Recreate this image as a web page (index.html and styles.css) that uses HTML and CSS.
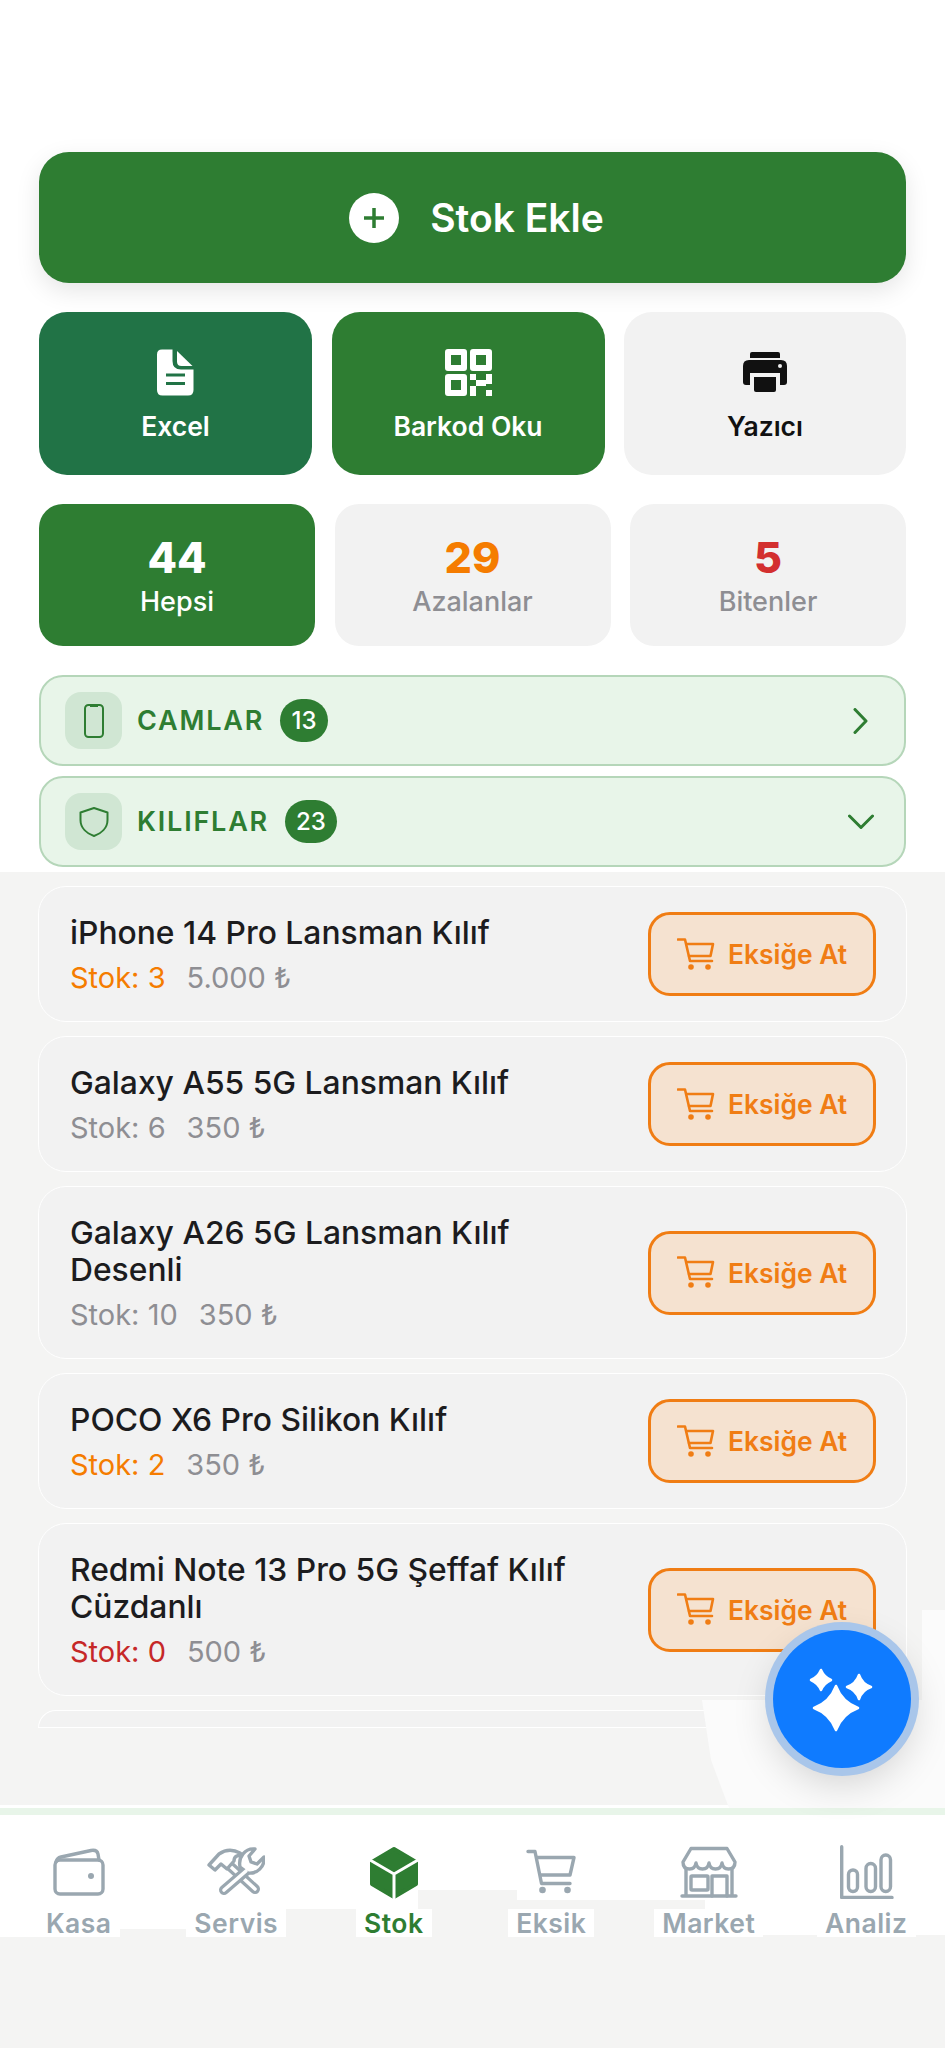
FILE: index.html
```html
<!doctype html>
<html lang="tr">
<head>
<meta charset="utf-8">
<title>Stok</title>
<link rel="stylesheet" href="styles.css">
</head>
<body>

<div class="page">

	<div class="top">

		<button class="add-btn">
			<span class="add-circle">
				<svg width="24" height="24" viewBox="0 0 24 24"><path d="M12 2V22M2 12H22" class="plus"/></svg>
			</span>
			Stok Ekle
		</button>

		<div class="tools">
			<div class="tool tool-excel">
				<svg width="37" height="47" viewBox="0 0 37 47">
					<path class="white" fill-rule="evenodd" d="M5 0.5H15.5V12Q15.5 20.5 24 20.5H36.5V41Q36.5 46.5 31 46.5H5.5Q0 46.5 0 41V5.5Q0 0.5 5 0.5ZM9 24.5V27.5H28V24.5ZM9 33V36H28V33Z"/>
					<path class="white" d="M20 2L35.5 17H24.5Q20 17 20 12.5Z"/>
				</svg>
				<span>Excel</span>
			</div>
			<div class="tool tool-green">
				<svg width="47" height="47" viewBox="0 0 47 47">
					<g class="white" fill-rule="evenodd">
						<path d="M3 0H19Q22 0 22 3V19Q22 22 19 22H3Q0 22 0 19V3Q0 0 3 0ZM6 6V16H16V6Z"/>
						<path d="M28 0H44Q47 0 47 3V19Q47 22 44 22H28Q25 22 25 19V3Q25 0 28 0ZM31 6V16H41V6Z"/>
						<path d="M3 25H19Q22 25 22 28V44Q22 47 19 47H3Q0 47 0 44V28Q0 25 3 25ZM6 31V41H16V31Z"/>
					</g>
					<path class="white" d="M25 25H31V31H25ZM41 25H47V35H41ZM31 31H41V37H31ZM25 37H31V47H25ZM41 41H47V47H41Z"/>
				</svg>
				<span>Barkod Oku</span>
			</div>
			<div class="tool tool-gray">
				<svg width="44" height="42" viewBox="0 0 44 42">
					<path d="M9 0H35Q37 0 37 2V6H7V2Q7 0 9 0Z" class="black"/>
					<path d="M6 8H38Q44 8 44 14V30Q44 33 41 33H37V21H7V33H3Q0 33 0 30V14Q0 8 6 8Z" class="black"/>
					<path d="M11 25H33V38Q33 40 31 40H13Q11 40 11 38Z" class="black"/>
					<circle cx="37" cy="14" r="2" class="dot"/>
				</svg>
				<span>Yazıcı</span>
			</div>
		</div>

		<div class="stats">
			<div class="stat stat-on">
				<div class="stat-num">44</div>
				<div class="stat-label">Hepsi</div>
			</div>
			<div class="stat">
				<div class="stat-num orange">29</div>
				<div class="stat-label">Azalanlar</div>
			</div>
			<div class="stat">
				<div class="stat-num red">5</div>
				<div class="stat-label">Bitenler</div>
			</div>
		</div>

		<div class="cat">
			<span class="cat-icon">
				<svg width="20" height="34" viewBox="0 0 20 34">
					<rect x="1" y="1" width="18" height="32" rx="3.5" class="line-green"/>
					<path d="M6 2H14" class="line-green"/>
				</svg>
			</span>
			<span class="cat-name">CAMLAR</span>
			<span class="cat-count">13</span>
			<svg class="chev" width="26" height="26" viewBox="0 0 26 26"><path d="M7 1.5L18 13L7 24.5" class="line-chev"/></svg>
		</div>

		<div class="cat">
			<span class="cat-icon">
				<svg width="30" height="30" viewBox="0 0 30 30">
					<path d="M15 1L28.5 5.5V13C28.5 21 22 26.5 15 29C8 26.5 1.5 21 1.5 13V5.5Z" class="line-green"/>
				</svg>
			</span>
			<span class="cat-name">KILIFLAR</span>
			<span class="cat-count">23</span>
			<svg class="chev" width="26" height="26" viewBox="0 0 26 26"><path d="M1.5 7L13 18.5L24.5 7" class="line-chev"/></svg>
		</div>

	</div>

	<div class="list">

		<div class="card">
			<div class="card-text">
				<div class="card-title">iPhone 14 Pro Lansman Kılıf</div>
				<div class="card-meta"><span class="orange">Stok: 3</span><span>5.000 ₺</span></div>
			</div>
			<button class="short-btn"><svg class="cart" width="38" height="33" viewBox="0 0 38 33"><use href="#cart"/></svg>Eksiğe At</button>
		</div>

		<div class="card">
			<div class="card-text">
				<div class="card-title">Galaxy A55 5G Lansman Kılıf</div>
				<div class="card-meta"><span>Stok: 6</span><span>350 ₺</span></div>
			</div>
			<button class="short-btn"><svg class="cart" width="38" height="33" viewBox="0 0 38 33"><use href="#cart"/></svg>Eksiğe At</button>
		</div>

		<div class="card">
			<div class="card-text">
				<div class="card-title">Galaxy A26 5G Lansman Kılıf Desenli</div>
				<div class="card-meta"><span>Stok: 10</span><span>350 ₺</span></div>
			</div>
			<button class="short-btn"><svg class="cart" width="38" height="33" viewBox="0 0 38 33"><use href="#cart"/></svg>Eksiğe At</button>
		</div>

		<div class="card">
			<div class="card-text">
				<div class="card-title">POCO X6 Pro Silikon Kılıf</div>
				<div class="card-meta"><span class="orange">Stok: 2</span><span>350 ₺</span></div>
			</div>
			<button class="short-btn"><svg class="cart" width="38" height="33" viewBox="0 0 38 33"><use href="#cart"/></svg>Eksiğe At</button>
		</div>

		<div class="card">
			<div class="card-text">
				<div class="card-title">Redmi Note 13 Pro 5G Şeffaf Kılıf Cüzdanlı</div>
				<div class="card-meta"><span class="red-soft">Stok: 0</span><span>500 ₺</span></div>
			</div>
			<button class="short-btn"><svg class="cart" width="38" height="33" viewBox="0 0 38 33"><use href="#cart"/></svg>Eksiğe At</button>
		</div>

		<div class="card card-cut"></div>

	</div>

	<nav class="nav">
		<svg class="nav-patch" width="945" height="122" viewBox="0 0 945 122"><path d="M112 122V114H282V94H418V75H517V85H705V120H945V122Z"/></svg>
		<div class="nav-item">
			<svg class="nav-icon" width="52" height="54" viewBox="0 0 52 54">
				<rect x="2" y="15" width="48" height="34" rx="5"/>
				<path d="M3 17Q4 13 8 12L38 5.5Q44 4.5 45 9L46 15"/>
				<circle cx="38" cy="31" r="3" class="nav-dot"/>
			</svg>
			<span>Kasa</span>
		</div>
		<div class="nav-item">
			<svg class="nav-icon" width="58" height="54" viewBox="0 0 58 54">
				<path class="tool-out" d="M24 22L48 44"/>
				<path class="tool-in" d="M24 22L48 44"/>
				<path class="tool-fill" d="M2 20L12 9Q22 2 33 8L36 11Q27 9 27 16L20 24L14 19L8 25Z"/>
				<path class="tool-out" d="M38 27L17 45"/>
				<path class="tool-fill" d="M33 22C31 12 38 3 48 4L42 11L44 17L50 19L57 12C58 22 50 29 41 28Z"/>
				<path class="tool-in" d="M39 26L17 45"/>
			</svg>
			<span>Servis</span>
		</div>
		<div class="nav-item nav-on">
			<svg width="50" height="54" viewBox="0 0 50 54">
				<path class="cube" d="M25 4L47 17V39L25 52L3 39V17Z"/>
				<path class="cube-y" d="M25 29L1 15M25 29L49 15M25 29V54"/>
			</svg>
			<span>Stok</span>
		</div>
		<div class="nav-item">
			<svg class="nav-icon" width="50" height="54" viewBox="0 0 50 54">
				<path d="M2 6.5H9L15.5 38.5H44"/>
				<path d="M11 12.5H48L44 30H15"/>
				<circle cx="16.5" cy="45" r="3.3" class="nav-dot"/>
				<circle cx="41.5" cy="45" r="3.3" class="nav-dot"/>
			</svg>
			<span>Eksik</span>
		</div>
		<div class="nav-item">
			<svg class="nav-icon" width="58" height="54" viewBox="0 0 58 54">
				<path d="M11 3.5H47L55 17Q55 24 48.5 24Q43 24 42 18Q41 24 35.5 24Q30 24 29 18Q28 24 22.5 24Q17 24 16 18Q15 24 9.5 24Q3 24 3 17Z"/>
				<path d="M6 24V51M52 24V51M2 51H56"/>
				<rect x="11" y="31" width="17" height="14" rx="1"/>
				<path d="M32 51V31H47V51"/>
			</svg>
			<span>Market</span>
		</div>
		<div class="nav-item">
			<svg class="nav-icon" width="56" height="54" viewBox="0 0 56 54">
				<path d="M3.7 1.7V52.5H54"/>
				<rect x="10.5" y="25" width="9" height="21.5" rx="4.5"/>
				<rect x="28" y="18.5" width="9.5" height="28" rx="4.7"/>
				<rect x="43" y="10" width="9.5" height="36.5" rx="4.7"/>
			</svg>
			<span>Analiz</span>
		</div>
	</nav>

	<div class="glow glow-low"></div>
	<div class="glow glow-side"></div>

	<div class="fab">
		<svg width="80" height="80" viewBox="0 0 80 80">
			<path class="star" d="M34 27Q40 43 56 49Q40 55 34 71Q28 55 12 49Q28 43 34 27Z"/>
			<path class="star" d="M19 11Q22 18 29 21Q22 24 19 31Q16 24 9 21Q16 18 19 11Z"/>
			<path class="star" d="M57 16Q60 25 69 28Q60 31 57 40Q54 31 45 28Q54 25 57 16Z"/>
		</svg>
	</div>

</div>

<svg width="0" height="0" class="defs">
	<symbol id="cart" viewBox="0 0 38 33">
		<path d="M1 1.5H8L13 23H35" class="line-cart"/>
		<path d="M10 6H36L33.5 18H12" class="line-cart"/>
		<circle cx="14" cy="29" r="2.8" class="dot-cart"/>
		<circle cx="31" cy="29" r="2.8" class="dot-cart"/>
	</symbol>
</svg>

</body>
</html>
```
FILE: styles.css
```css
body { margin: 0; background: #f4f4f3; font-family: Inter, "Liberation Sans", sans-serif; }
button { font-family: inherit; cursor: pointer; }
svg { display: block; }

.page { position: relative; width: 945px; height: 2048px; overflow: hidden; }
.defs { position: absolute; }

.white { fill: #fff; }
.black { fill: #111; }
.dot { fill: #eee; }
.orange { color: #f57c00; }
.red { color: #d32f2f; }
.red-soft { color: #c62828; }

.top { background: #fff; padding: 152px 39px 5px; height: 715px; }

.add-btn { width: 867px; height: 131px; padding: 0 0 0 8px; background: #2e7d32; color: #fff; border: none; border-radius: 30px; box-shadow: 0 8px 24px rgba(0, 0, 0, .1); font-size: 39px; font-weight: 600; display: flex; align-items: center; justify-content: center; gap: 31px; }
.add-circle { width: 50px; height: 50px; border-radius: 50%; background: #fff; display: flex; align-items: center; justify-content: center; }
.plus { stroke: #2e7d32; stroke-width: 3.5; fill: none; }

.tools { display: grid; grid-template-columns: 273px 273px 282px; column-gap: 19.5px; margin-top: 29px; }
.tool { height: 163px; border-radius: 28px; display: flex; flex-direction: column; align-items: center; padding-top: 37px; box-sizing: border-box; font-size: 26.5px; font-weight: 600; color: #fff; }
.tool span { margin-top: 13.5px; line-height: 32px; }
.tool-excel { background: #217346; }
.tool-green { background: #2e7d32; }
.tool-gray { background: #f2f2f2; color: #111; }
.tool-gray svg { margin: 3px 0 2px; }

.stats { display: grid; grid-template-columns: repeat(3, 276px); column-gap: 19.5px; margin-top: 29px; }
.stat { height: 142px; border-radius: 24px; background: #f2f2f2; display: flex; flex-direction: column; align-items: center; padding-top: 28px; box-sizing: border-box; }
.stat-num { font-size: 43px; font-weight: 800; line-height: 50px; }
.stat-label { font-size: 27px; font-weight: 500; line-height: 32px; margin-top: 4px; color: #8e8e93; }
.stat-on { background: #2e7d32; color: #fff; }
.stat-on .stat-label { color: #fff; }

.cat { height: 91px; box-sizing: border-box; border: 2px solid #b5d6b9; border-radius: 24px; background: #e8f5e9; display: flex; align-items: center; padding: 0 24px; margin-top: 10px; }
.stats + .cat { margin-top: 29px; }
.cat-icon { width: 57px; height: 57px; border-radius: 16px; background: #d0e6d3; display: flex; align-items: center; justify-content: center; }
.cat-name { margin-left: 15px; font-size: 27px; font-weight: 600; letter-spacing: 1.8px; color: #2e7d32; }
.cat-count { margin-left: 16px; min-width: 48px; height: 43px; padding: 0 11px; box-sizing: border-box; border-radius: 22px; background: #2e7d32; color: #fff; font-size: 24px; font-weight: 500; display: flex; align-items: center; justify-content: center; }
.chev { margin-left: auto; margin-right: 6px; }
.line-green { fill: none; stroke: #2e7d32; stroke-width: 2; stroke-linejoin: round; }
.line-chev { fill: none; stroke: #2e7d32; stroke-width: 3; stroke-linecap: round; stroke-linejoin: round; }

.list { height: 922px; padding: 14px 38px 0; overflow: hidden; display: flex; flex-direction: column; gap: 14px; }
.card { flex: none; border: 1.5px solid #fff; border-radius: 28px; background: #f2f2f2; display: flex; align-items: center; justify-content: space-between; padding: 0 30px 0 31px; }
.card-text { width: 520px; padding: 27px 0 25px; }
.card-title { font-size: 31.8px; font-weight: 500; line-height: 37px; color: #1c1c1e; }
.card-meta { display: flex; gap: 21px; height: 36px; margin-top: 9px; font-size: 29px; line-height: 36px; color: #8e8e93; }
.card-cut { height: 18px; padding: 0; box-sizing: border-box; border-bottom-left-radius: 0; border-bottom-right-radius: 0; }

.short-btn { width: 228px; height: 84px; flex: none; box-sizing: border-box; border: 3px solid #f07d14; border-radius: 22px; background: #f5e2d0; color: #f07d14; font-size: 26.4px; font-weight: 600; display: flex; align-items: center; justify-content: center; gap: 13px; padding: 0; }
.line-cart { fill: none; stroke: #f07d14; stroke-width: 2.6; stroke-linecap: round; stroke-linejoin: round; }
.dot-cart { fill: #f07d14; }

.nav { position: relative; background: #fff; height: 92px; border-top: 7px solid #e8f5e9; display: grid; grid-template-columns: repeat(6, 1fr); padding-top: 30px; box-shadow: 0 -3px 0 #fff; }
.nav-patch { position: absolute; left: 0; top: 0; fill: #f4f4f3; }
.nav-item { position: relative; display: flex; flex-direction: column; align-items: center; font-size: 26.5px; font-weight: 600; letter-spacing: .5px; color: #9aa7b0; }
.nav-item span { margin-top: 10px; line-height: 28px; background: #fff; padding: 0 8px; }
.nav-on { color: #2e7d32; }
.nav-icon { fill: none; stroke: #9aa7b0; stroke-width: 3.4; stroke-linecap: round; stroke-linejoin: round; }
.nav-dot { fill: #9aa7b0; stroke: none; }
.tool-out { stroke-width: 10; }
.tool-in { stroke: #fff; stroke-width: 3.6; }
.tool-fill { fill: #fff; }
.cube { fill: #2e7d32; stroke: #2e7d32; stroke-width: 4; stroke-linejoin: round; }
.cube-y { fill: none; stroke: #fff; stroke-width: 3; }

.glow { position: absolute; background: #fbfbfb; }
.glow-low { left: 702px; top: 1700px; width: 243px; height: 108px; clip-path: polygon(0 0, 100% 0, 100% 100%, 27px 100%, 9px 60px); }
.glow-side { left: 922px; top: 1610px; width: 23px; height: 90px; }

.fab { position: absolute; left: 773px; top: 1630px; width: 138px; height: 138px; border-radius: 50%; background: #0f7bff; box-shadow: 0 0 0 8px #a9c6ea, 0 14px 40px rgba(0, 0, 0, .18); display: flex; align-items: center; justify-content: center; }
.star { fill: #fff; stroke: #fff; stroke-width: 2.5; stroke-linejoin: round; }
```
